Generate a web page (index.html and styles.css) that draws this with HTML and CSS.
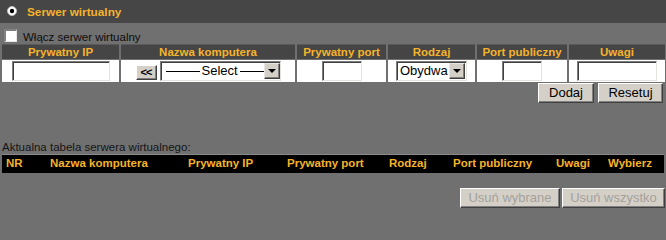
FILE: index.html
```html
<!DOCTYPE html>
<html lang="pl">
<head>
<meta charset="utf-8">
<title>Serwer wirtualny</title>
<link rel="stylesheet" href="styles.css">
</head>
<body>
<div class="page">
  <div class="titlebar">
    <svg class="radio" width="10" height="10" viewBox="0 0 10 10" aria-hidden="true">
      <circle cx="5" cy="5" r="4.5" fill="#ffffff" stroke="#bdbdbd" stroke-width="1"/>
      <circle cx="5" cy="5" r="2.2" fill="#000000"/>
    </svg>
    <span class="title">Serwer wirtualny</span>
  </div>

  <label class="enable">
    <span class="checkbox"></span>
    <span class="enable-text">Włącz serwer wirtualny</span>
  </label>

  <div class="vs-table">
    <div class="th">Prywatny IP</div>
    <div class="th">Nazwa komputera</div>
    <div class="th">Prywatny port</div>
    <div class="th">Rodzaj</div>
    <div class="th">Port publiczny</div>
    <div class="th">Uwagi</div>

    <div class="td"><span class="field w98"></span></div>
    <div class="td">
      <span class="btn-small">&lt;&lt;</span>
      <span class="select w121"><span class="select-text select-pc"><span class="line l34"></span>Select<span class="line l24"></span></span><span class="arrow"></span></span>
    </div>
    <div class="td"><span class="field w40"></span></div>
    <div class="td">
      <span class="select w71"><span class="select-text">Obydwa</span><span class="arrow"></span></span>
    </div>
    <div class="td"><span class="field w40"></span></div>
    <div class="td"><span class="field w80"></span></div>
  </div>

  <div class="actions">
    <span class="btn w56">Dodaj</span>
    <span class="btn w65">Resetuj</span>
  </div>

  <div class="caption">Aktualna tabela serwera wirtualnego:</div>

  <div class="list-head">
    <span>NR</span>
    <span>Nazwa komputera</span>
    <span>Prywatny IP</span>
    <span>Prywatny port</span>
    <span>Rodzaj</span>
    <span>Port publiczny</span>
    <span>Uwagi</span>
    <span>Wybierz</span>
  </div>

  <div class="actions bottom">
    <span class="btn disabled w100">Usuń wybrane</span>
    <span class="btn disabled w103">Usuń wszystko</span>
  </div>
</div>
</body>
</html>
```

FILE: styles.css
```css
html, body {
  margin: 0;
  padding: 0;
}
body {
  background: #707070;
  font-family: "Liberation Sans", Arial, sans-serif;
  font-size: 11.5px;
  color: #111;
}
.page {
  width: 666px;
  height: 213px;
  overflow: hidden;
}
.titlebar {
  height: 23px;
  background: #464646;
  display: flex;
  align-items: center;
  padding-left: 7px;
  box-sizing: border-box;
}
.radio {
  display: block;
  margin-top: -1px;
}
.title {
  margin-left: 10px;
  color: #f5b32c;
  font-weight: bold;
  font-size: 11.8px;
  line-height: 14px;
}
.enable {
  display: flex;
  align-items: flex-start;
  height: 21px;
  padding: 6px 0 0 4px;
  box-sizing: border-box;
}
.checkbox {
  width: 13px;
  height: 13px;
  box-sizing: border-box;
  background: #fff;
  border-top: 2px solid #808080;
  border-left: 2px solid #808080;
  border-right: 1px solid #e8e8e8;
  border-bottom: 1px solid #e8e8e8;
}
.enable-text {
  margin-left: 6px;
  line-height: 14px;
  margin-top: 1px;
  color: #0c0c0c;
}
.vs-table {
  display: grid;
  grid-template-columns: 117px 174px 89px 87px 90px 96px;
  column-gap: 2px;
  row-gap: 1px;
  margin-left: 2px;
}
.th {
  height: 15px;
  background: #454545;
  border-top: 1px solid #5a5a5a;
  box-sizing: border-box;
  color: #f5b32c;
  font-weight: bold;
  font-size: 11.5px;
  line-height: 14px;
  text-align: center;
}
.td {
  height: 22px;
  background: #fff;
  display: flex;
  align-items: center;
  justify-content: center;
  gap: 3px;
}
.field {
  display: block;
  height: 20px;
  box-sizing: border-box;
  background: #fff;
  border-top: 1px solid #7c7c7c;
  border-left: 1px solid #7c7c7c;
  border-right: 1px solid #e4e2dc;
  border-bottom: 1px solid #e4e2dc;
  box-shadow: inset 1px 1px 0 #404040;
}
.w98 { width: 98px; }
.w40 { width: 40px; }
.w80 { width: 80px; }
.w71 { width: 71px; }
.w121 { width: 121px; }
.w56 { width: 56px; }
.w65 { width: 65px; }
.w100 { width: 100px; }
.w103 { width: 103px; }
.btn-small {
  width: 21px;
  height: 15px;
  margin-top: 3px;
  box-sizing: border-box;
  background: #d4d0c8;
  border-top: 1px solid #fff;
  border-left: 1px solid #fff;
  border-right: 1px solid #404040;
  border-bottom: 1px solid #404040;
  box-shadow: inset -1px -1px 0 #808080;
  font-size: 11px;
  font-weight: bold;
  line-height: 13px;
  text-align: center;
  color: #000;
  letter-spacing: -1px;
}
.select {
  display: flex;
  align-items: center;
  height: 20px;
  box-sizing: border-box;
  background: #fff;
  border-top: 1px solid #7c7c7c;
  border-left: 1px solid #7c7c7c;
  border-right: 1px solid #e4e2dc;
  border-bottom: 1px solid #e4e2dc;
  box-shadow: inset 1px 1px 0 #404040;
  overflow: hidden;
}
.select-text {
  flex: 1;
  padding-left: 3px;
  font-size: 13px;
  line-height: 16px;
  color: #000;
  white-space: nowrap;
}
.select-pc {
  display: flex;
  align-items: center;
  padding-left: 5px;
}
.line {
  display: block;
  height: 1px;
  background: #000;
  flex: none;
}
.l34 { width: 34px; margin-right: 2px; }
.l24 { width: 24px; margin-left: 2px; }
.arrow {
  position: relative;
  flex: none;
  width: 16px;
  height: 16px;
  margin-right: 1px;
  box-sizing: border-box;
  background: #d4d0c8;
  border-top: 1px solid #e8e6e0;
  border-left: 1px solid #e8e6e0;
  border-right: 1px solid #404040;
  border-bottom: 1px solid #404040;
  box-shadow: inset -1px -1px 0 #808080;
}
.arrow::after {
  content: "";
  position: absolute;
  left: 3px;
  top: 5px;
  border-left: 4px solid transparent;
  border-right: 4px solid transparent;
  border-top: 4px solid #000;
}
.actions {
  display: flex;
  justify-content: flex-end;
  gap: 4px;
  margin-top: 1px;
  padding-right: 3px;
}
.btn {
  height: 20px;
  box-sizing: border-box;
  background: #d4d0c8;
  border-top: 1px solid #fff;
  border-left: 1px solid #fff;
  border-right: 1px solid #404040;
  border-bottom: 1px solid #404040;
  box-shadow: inset -1px -1px 0 #808080;
  font-size: 13px;
  line-height: 17px;
  text-align: center;
  color: #000;
}
.btn.disabled {
  color: #a4a19b;
}
.caption {
  margin-top: 37px;
  margin-left: 2px;
  line-height: 14px;
  color: #151515;
}
.list-head {
  display: grid;
  grid-template-columns: 44px 138px 99px 102px 64px 103px 52px 1fr;
  height: 19px;
  margin: 0 2px;
  padding-left: 4px;
  box-sizing: border-box;
  background: #000;
  border-top: 1px solid #8a8a8a;
  color: #f5b32c;
  font-weight: bold;
  font-size: 11.5px;
  line-height: 17px;
  white-space: nowrap;
}
.actions.bottom {
  margin-top: 15px;
  gap: 2px;
  padding-right: 1px;
}
```
